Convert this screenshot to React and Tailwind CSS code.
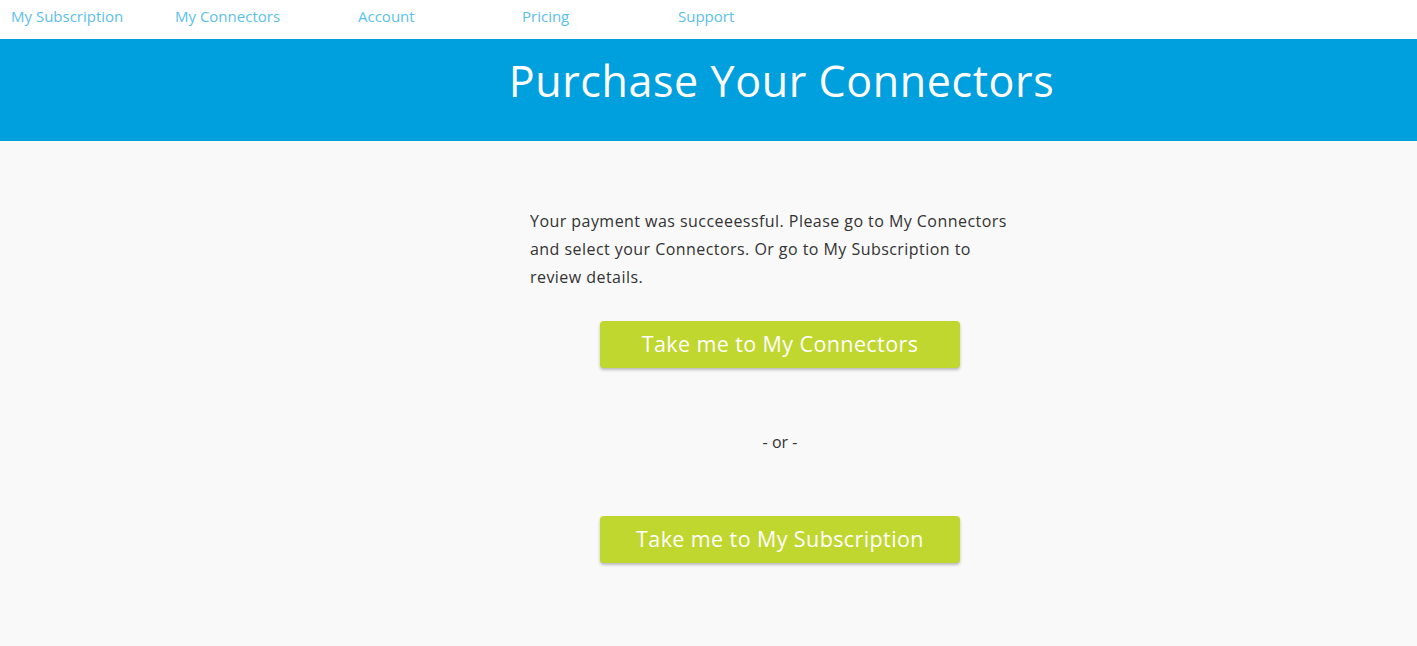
export default function App() {
  const nav = [
    { label: "My Subscription", w: "w-[164px]" },
    { label: "My Connectors", w: "w-[183px]" },
    { label: "Account", w: "w-[164px]" },
    { label: "Pricing", w: "w-[156px]" },
    { label: "Support", w: "w-[120px]" },
  ];

  return (
    <div className="min-h-screen bg-[#f9f9f9] font-['Open_Sans',sans-serif]">
      <nav className="h-[39px] bg-white flex items-center pl-[11px] pb-[6px]">
        {nav.map((item) => (
          <a key={item.label} href="#" className={`${item.w} text-[15px] text-[#5bbfea]`}>
            {item.label}
          </a>
        ))}
      </nav>

      <header className="h-[102px] bg-[#00a0df] flex items-center justify-center pl-[146px]">
        <h1 className="text-[43px] text-white font-normal pb-[18px] tracking-[0.6px]">Purchase Your Connectors</h1>
      </header>

      <main className="pl-[530px] pt-[66px] pb-16">
        <div className="w-[500px] flex flex-col">
          <p className="text-[16px] leading-[28px] text-[#333] tracking-[0.45px] pr-[10px]">
            Your payment was succeeessful. Please go to My Connectors and select your Connectors. Or go to My Subscription to review details.
          </p>

          <div className="flex justify-center mt-[30px]">
            <button className="w-[360px] h-[47px] rounded bg-[#c0d72f] text-white text-[21.5px] tracking-[0.4px] shadow-[0_2px_3px_rgba(0,0,0,0.25)]">
              Take me to My Connectors
            </button>
          </div>

          <p className="text-center text-[16px] text-[#333] mt-[62px]">- or -</p>

          <div className="flex justify-center mt-[62px]">
            <button className="w-[360px] h-[47px] rounded bg-[#c0d72f] text-white text-[21.5px] tracking-[0.4px] shadow-[0_2px_3px_rgba(0,0,0,0.25)]">
              Take me to My Subscription
            </button>
          </div>
        </div>
      </main>
    </div>
  );
}
